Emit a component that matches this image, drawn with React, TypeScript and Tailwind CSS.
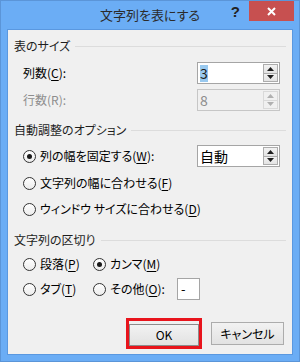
import React from "react"

function Mn({ children }: { children: React.ReactNode }) {
  return <span className="underline underline-offset-2">{children}</span>
}

function Arrow({ up, disabled }: { up?: boolean; disabled?: boolean }) {
  return (
    <svg width="7" height="4" viewBox="0 0 7 4" className="block">
      <path
        d={up ? "M0 4 L3.5 0 L7 4 Z" : "M0 0 L3.5 4 L7 0 Z"}
        fill={disabled ? "#b0b0b0" : "#1e1e1e"}
      />
    </svg>
  )
}

function Spin({ value, selected, disabled }: { value: string; selected?: boolean; disabled?: boolean }) {
  return (
    <div
      className={
        "w-[83px] h-[22px] flex border " +
        (disabled ? "border-[#c6c6c6] bg-[#f0f0f0]" : "border-[#a5a5a5] bg-white")
      }
    >
      <div className="flex-1 flex items-center pl-[2px] text-[14px] leading-[17px]">
        <span className={selected ? "bg-[#99c9ef] text-[#1a1a1a]" : disabled ? "text-[#8d8d8d]" : "text-black"}>
          {value}
        </span>
      </div>
      <div className="w-[16px] flex flex-col py-[1px] pr-[1px]">
        <div
          className={
            "flex-1 flex items-center justify-center border " +
            (disabled ? "border-[#d9d9d9] bg-[#f0f0f0]" : "border-[#acacac] bg-gradient-to-b from-[#f2f2f2] to-[#e3e3e3]")
          }
        >
          <Arrow up disabled={disabled} />
        </div>
        <div
          className={
            "flex-1 flex items-center justify-center border border-t-0 " +
            (disabled ? "border-[#d9d9d9] bg-[#f0f0f0]" : "border-[#acacac] bg-gradient-to-b from-[#f2f2f2] to-[#e3e3e3]")
          }
        >
          <Arrow disabled={disabled} />
        </div>
      </div>
    </div>
  )
}

function Radio({ checked, label, className = "" }: { checked?: boolean; label: React.ReactNode; className?: string }) {
  return (
    <div className={"flex items-center gap-[4px] " + className}>
      <span className="w-[13px] h-[13px] rounded-full border border-[#333] bg-gradient-to-b from-white to-[#ececec] flex items-center justify-center">
        {checked && <span className="w-[5px] h-[5px] rounded-full bg-[#1a1a1a]" />}
      </span>
      <span className="text-[12px] leading-[20px] text-black">{label}</span>
    </div>
  )
}

function GroupHeader({ title, className = "" }: { title: string; className?: string }) {
  return (
    <div className={"h-[20px] flex items-center gap-[5px] pl-[6px] pr-[6px] " + className}>
      <span className="text-[12px] leading-[20px] text-[#1e1e1e]">{title}</span>
      <div className="flex-1 h-px bg-[#dcdcdc]" />
    </div>
  )
}

export default function App() {
  return (
    <div className="w-[300px] h-[362px] bg-[#6badf5] border border-[#5b95d8] flex flex-col font-['Noto_Sans_CJK_JP',sans-serif] [font-feature-settings:'palt']">
      {/* title bar */}
      <div className="relative h-[28px] shrink-0 flex items-center justify-center">
        <span className="text-[13px] leading-[18px] text-[#2b2b2b] pb-[1px]">文字列を表にする</span>
        <span className="absolute right-[59px] top-[2px] text-[15px] font-bold text-[#222] leading-[18px] font-['Liberation_Sans',sans-serif]">
          ?
        </span>
        <div className="absolute right-[5px] top-0 w-[45px] h-[20px] bg-[#c75050] flex items-center justify-center">
          <svg width="9" height="9" viewBox="0 0 9 9">
            <path d="M1 1 L8 8 M8 1 L1 8" stroke="#fff" strokeWidth="2" />
          </svg>
        </div>
      </div>

      {/* client area */}
      <div className="mx-[6px] h-[326px] border border-[#5a98e0] bg-[#f0f0f0] pt-[6px] flex flex-col">
        <GroupHeader title="表のサイズ" />
        <div className="mt-[6px] h-[22px] flex items-center justify-between pl-[15px] pr-[12px]">
          <span className="text-[12px] text-black">
            列数(<Mn>C</Mn>):
          </span>
          <Spin value="3" selected />
        </div>
        <div className="mt-[5px] h-[22px] flex items-center justify-between pl-[15px] pr-[12px]">
          <span className="text-[12px] text-[#8d8d8d]">行数(R):</span>
          <Spin value="8" disabled />
        </div>

        <GroupHeader title="自動調整のオプション" className="mt-[9px]" />
        <div className="mt-[5px] h-[22px] flex items-center justify-between pl-[15px] pr-[12px]">
          <Radio
            checked
            label={
              <>
                列の幅を固定する(<Mn>W</Mn>):
              </>
            }
          />
          <Spin value="自動" />
        </div>
        <div className="mt-[6px] pl-[15px]">
          <Radio
            label={
              <>
                文字列の幅に合わせる(<Mn>F</Mn>)
              </>
            }
          />
        </div>
        <div className="mt-[6px] pl-[15px]">
          <Radio
            label={
              <>
                ウィンドウ サイズに合わせる(<Mn>D</Mn>)
              </>
            }
          />
        </div>

        <GroupHeader title="文字列の区切り" className="mt-[11px]" />
        <div className="mt-[4px] h-[20px] flex items-center pl-[15px]">
          <Radio
            className="w-[70px]"
            label={
              <>
                段落(<Mn>P</Mn>)
              </>
            }
          />
          <Radio
            checked
            label={
              <>
                カンマ(<Mn>M</Mn>)
              </>
            }
          />
        </div>
        <div className="mt-[4px] h-[22px] flex items-center pl-[15px]">
          <Radio
            className="w-[70px]"
            label={
              <>
                タブ(<Mn>T</Mn>)
              </>
            }
          />
          <Radio
            className="w-[84px]"
            label={
              <>
                その他(<Mn>O</Mn>):
              </>
            }
          />
          <div className="w-[23px] h-[22px] border border-[#a5a5a5] bg-white pl-[3px] text-[13px] leading-[19px] text-black">
            -
          </div>
        </div>

        {/* buttons */}
        <div className="mt-[18px] flex items-center justify-end gap-[9px] pr-[8px]">
          <div className="border-[3px] border-[#e8141c] p-0">
            <button className="w-[70px] h-[22px] border border-[#8c8c8c] bg-gradient-to-b from-[#f2f2f2] to-[#e2e2e2] text-[12px] text-black leading-none">
              OK
            </button>
          </div>
          <button className="w-[73px] h-[23px] border border-[#acacac] bg-gradient-to-b from-[#f2f2f2] to-[#e2e2e2] text-[12px] text-black leading-none">
            キャンセル
          </button>
        </div>
      </div>
    </div>
  )
}
